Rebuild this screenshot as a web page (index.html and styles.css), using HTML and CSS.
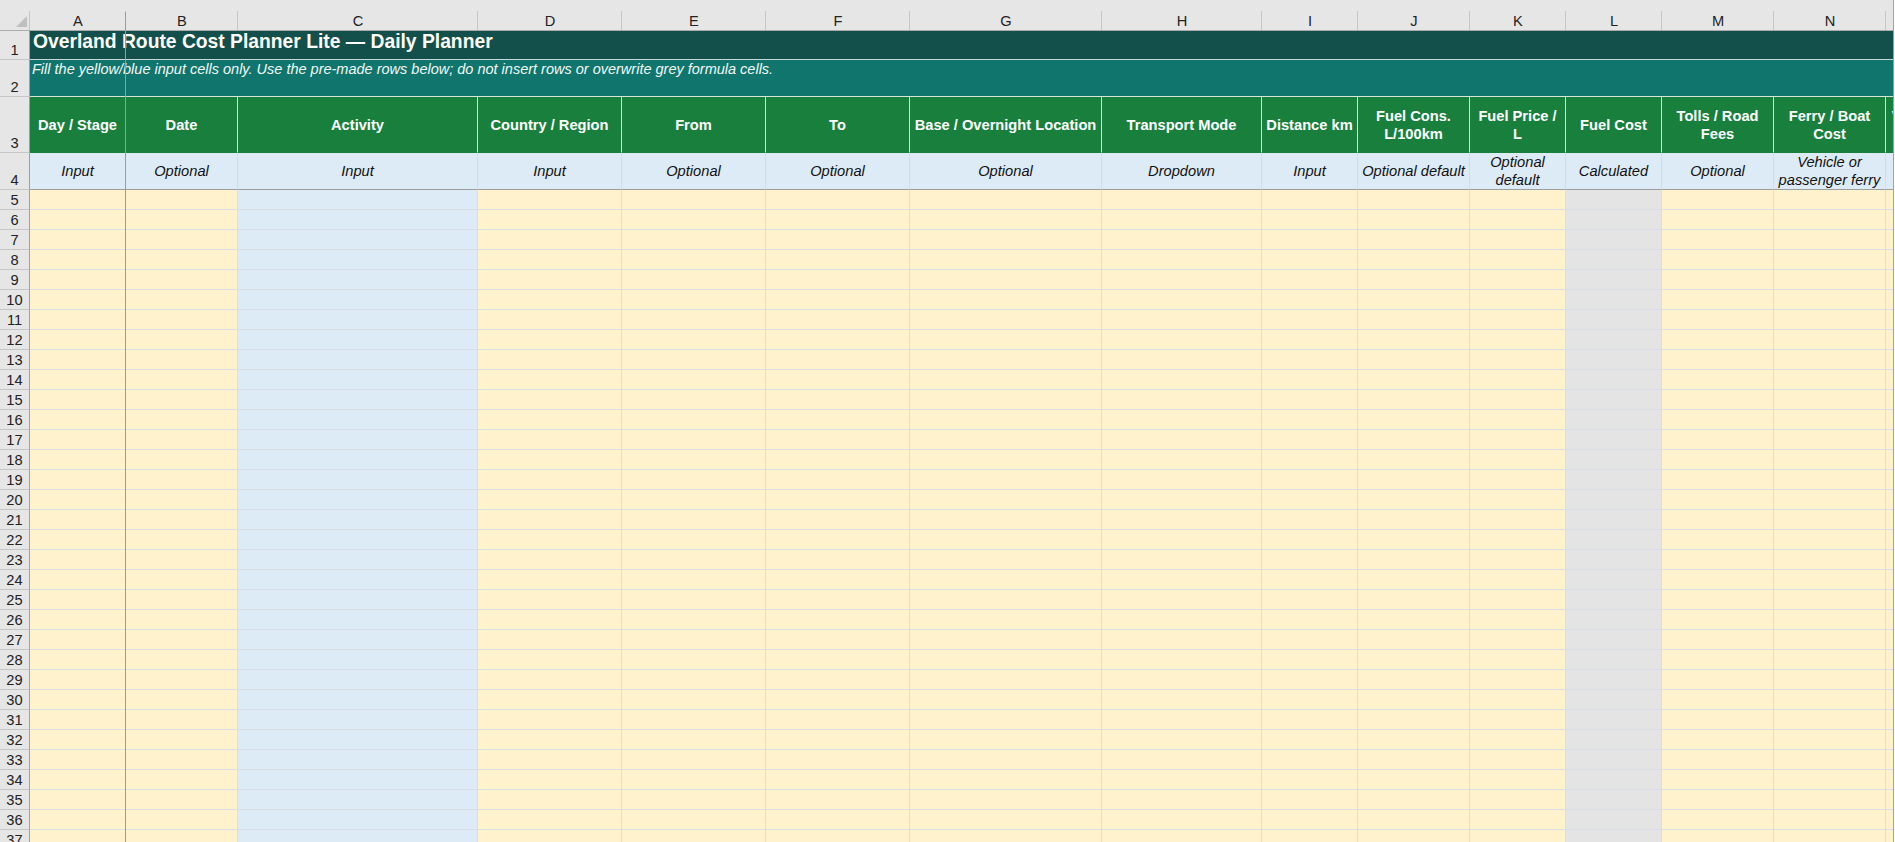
FILE: index.html
```html
<!DOCTYPE html>
<html lang="en">
<head>
<meta charset="utf-8">
<title>Overland Route Cost Planner Lite — Daily Planner</title>
<link rel="stylesheet" href="styles.css">
</head>
<body>
<div class="frame">
  <div class="sheet">
    <div class="corner"><svg width="11" height="11" viewBox="0 0 11 11"><polygon points="11,0 11,11 0,11" fill="#bfbfbf"/></svg></div>
    <div class="ch">A</div><div class="ch">B</div><div class="ch">C</div><div class="ch">D</div><div class="ch">E</div><div class="ch">F</div><div class="ch">G</div><div class="ch">H</div><div class="ch">I</div><div class="ch">J</div><div class="ch">K</div><div class="ch">L</div><div class="ch">M</div><div class="ch">N</div><div class="ch">O</div>

    <div class="rn">1</div>
    <div class="title">Overland Route Cost Planner Lite — Daily Planner</div>

    <div class="rn">2</div>
    <div class="subtitle">Fill the yellow/blue input cells only. Use the pre-made rows below; do not insert rows or overwrite grey formula cells.</div>

    <div class="rn">3</div>
    <div class="hd">Day / Stage</div>
    <div class="hd">Date</div>
    <div class="hd">Activity</div>
    <div class="hd">Country / Region</div>
    <div class="hd">From</div>
    <div class="hd">To</div>
    <div class="hd">Base / Overnight Location</div>
    <div class="hd">Transport Mode</div>
    <div class="hd">Distance km</div>
    <div class="hd">Fuel Cons. L/100km</div>
    <div class="hd">Fuel Price / L</div>
    <div class="hd">Fuel Cost</div>
    <div class="hd">Tolls / Road Fees</div>
    <div class="hd">Ferry / Boat Cost</div>
    <div class="hd">Vehicle Rental / Hire</div>

    <div class="rn">4</div>
    <div class="note">Input</div>
    <div class="note">Optional</div>
    <div class="note">Input</div>
    <div class="note">Input</div>
    <div class="note">Optional</div>
    <div class="note">Optional</div>
    <div class="note">Optional</div>
    <div class="note">Dropdown</div>
    <div class="note">Input</div>
    <div class="note">Optional default</div>
    <div class="note">Optional default</div>
    <div class="note">Calculated</div>
    <div class="note">Optional</div>
    <div class="note">Vehicle or passenger ferry</div>
    <div class="note"></div>

    <div class="rn">5</div><div class="d y"></div><div class="d y"></div><div class="d b"></div><div class="d y"></div><div class="d y"></div><div class="d y"></div><div class="d y"></div><div class="d y"></div><div class="d y"></div><div class="d y"></div><div class="d y"></div><div class="d g"></div><div class="d y"></div><div class="d y"></div><div class="d y"></div>
    <div class="rn">6</div><div class="d y"></div><div class="d y"></div><div class="d b"></div><div class="d y"></div><div class="d y"></div><div class="d y"></div><div class="d y"></div><div class="d y"></div><div class="d y"></div><div class="d y"></div><div class="d y"></div><div class="d g"></div><div class="d y"></div><div class="d y"></div><div class="d y"></div>
    <div class="rn">7</div><div class="d y"></div><div class="d y"></div><div class="d b"></div><div class="d y"></div><div class="d y"></div><div class="d y"></div><div class="d y"></div><div class="d y"></div><div class="d y"></div><div class="d y"></div><div class="d y"></div><div class="d g"></div><div class="d y"></div><div class="d y"></div><div class="d y"></div>
    <div class="rn">8</div><div class="d y"></div><div class="d y"></div><div class="d b"></div><div class="d y"></div><div class="d y"></div><div class="d y"></div><div class="d y"></div><div class="d y"></div><div class="d y"></div><div class="d y"></div><div class="d y"></div><div class="d g"></div><div class="d y"></div><div class="d y"></div><div class="d y"></div>
    <div class="rn">9</div><div class="d y"></div><div class="d y"></div><div class="d b"></div><div class="d y"></div><div class="d y"></div><div class="d y"></div><div class="d y"></div><div class="d y"></div><div class="d y"></div><div class="d y"></div><div class="d y"></div><div class="d g"></div><div class="d y"></div><div class="d y"></div><div class="d y"></div>
    <div class="rn">10</div><div class="d y"></div><div class="d y"></div><div class="d b"></div><div class="d y"></div><div class="d y"></div><div class="d y"></div><div class="d y"></div><div class="d y"></div><div class="d y"></div><div class="d y"></div><div class="d y"></div><div class="d g"></div><div class="d y"></div><div class="d y"></div><div class="d y"></div>
    <div class="rn">11</div><div class="d y"></div><div class="d y"></div><div class="d b"></div><div class="d y"></div><div class="d y"></div><div class="d y"></div><div class="d y"></div><div class="d y"></div><div class="d y"></div><div class="d y"></div><div class="d y"></div><div class="d g"></div><div class="d y"></div><div class="d y"></div><div class="d y"></div>
    <div class="rn">12</div><div class="d y"></div><div class="d y"></div><div class="d b"></div><div class="d y"></div><div class="d y"></div><div class="d y"></div><div class="d y"></div><div class="d y"></div><div class="d y"></div><div class="d y"></div><div class="d y"></div><div class="d g"></div><div class="d y"></div><div class="d y"></div><div class="d y"></div>
    <div class="rn">13</div><div class="d y"></div><div class="d y"></div><div class="d b"></div><div class="d y"></div><div class="d y"></div><div class="d y"></div><div class="d y"></div><div class="d y"></div><div class="d y"></div><div class="d y"></div><div class="d y"></div><div class="d g"></div><div class="d y"></div><div class="d y"></div><div class="d y"></div>
    <div class="rn">14</div><div class="d y"></div><div class="d y"></div><div class="d b"></div><div class="d y"></div><div class="d y"></div><div class="d y"></div><div class="d y"></div><div class="d y"></div><div class="d y"></div><div class="d y"></div><div class="d y"></div><div class="d g"></div><div class="d y"></div><div class="d y"></div><div class="d y"></div>
    <div class="rn">15</div><div class="d y"></div><div class="d y"></div><div class="d b"></div><div class="d y"></div><div class="d y"></div><div class="d y"></div><div class="d y"></div><div class="d y"></div><div class="d y"></div><div class="d y"></div><div class="d y"></div><div class="d g"></div><div class="d y"></div><div class="d y"></div><div class="d y"></div>
    <div class="rn">16</div><div class="d y"></div><div class="d y"></div><div class="d b"></div><div class="d y"></div><div class="d y"></div><div class="d y"></div><div class="d y"></div><div class="d y"></div><div class="d y"></div><div class="d y"></div><div class="d y"></div><div class="d g"></div><div class="d y"></div><div class="d y"></div><div class="d y"></div>
    <div class="rn">17</div><div class="d y"></div><div class="d y"></div><div class="d b"></div><div class="d y"></div><div class="d y"></div><div class="d y"></div><div class="d y"></div><div class="d y"></div><div class="d y"></div><div class="d y"></div><div class="d y"></div><div class="d g"></div><div class="d y"></div><div class="d y"></div><div class="d y"></div>
    <div class="rn">18</div><div class="d y"></div><div class="d y"></div><div class="d b"></div><div class="d y"></div><div class="d y"></div><div class="d y"></div><div class="d y"></div><div class="d y"></div><div class="d y"></div><div class="d y"></div><div class="d y"></div><div class="d g"></div><div class="d y"></div><div class="d y"></div><div class="d y"></div>
    <div class="rn">19</div><div class="d y"></div><div class="d y"></div><div class="d b"></div><div class="d y"></div><div class="d y"></div><div class="d y"></div><div class="d y"></div><div class="d y"></div><div class="d y"></div><div class="d y"></div><div class="d y"></div><div class="d g"></div><div class="d y"></div><div class="d y"></div><div class="d y"></div>
    <div class="rn">20</div><div class="d y"></div><div class="d y"></div><div class="d b"></div><div class="d y"></div><div class="d y"></div><div class="d y"></div><div class="d y"></div><div class="d y"></div><div class="d y"></div><div class="d y"></div><div class="d y"></div><div class="d g"></div><div class="d y"></div><div class="d y"></div><div class="d y"></div>
    <div class="rn">21</div><div class="d y"></div><div class="d y"></div><div class="d b"></div><div class="d y"></div><div class="d y"></div><div class="d y"></div><div class="d y"></div><div class="d y"></div><div class="d y"></div><div class="d y"></div><div class="d y"></div><div class="d g"></div><div class="d y"></div><div class="d y"></div><div class="d y"></div>
    <div class="rn">22</div><div class="d y"></div><div class="d y"></div><div class="d b"></div><div class="d y"></div><div class="d y"></div><div class="d y"></div><div class="d y"></div><div class="d y"></div><div class="d y"></div><div class="d y"></div><div class="d y"></div><div class="d g"></div><div class="d y"></div><div class="d y"></div><div class="d y"></div>
    <div class="rn">23</div><div class="d y"></div><div class="d y"></div><div class="d b"></div><div class="d y"></div><div class="d y"></div><div class="d y"></div><div class="d y"></div><div class="d y"></div><div class="d y"></div><div class="d y"></div><div class="d y"></div><div class="d g"></div><div class="d y"></div><div class="d y"></div><div class="d y"></div>
    <div class="rn">24</div><div class="d y"></div><div class="d y"></div><div class="d b"></div><div class="d y"></div><div class="d y"></div><div class="d y"></div><div class="d y"></div><div class="d y"></div><div class="d y"></div><div class="d y"></div><div class="d y"></div><div class="d g"></div><div class="d y"></div><div class="d y"></div><div class="d y"></div>
    <div class="rn">25</div><div class="d y"></div><div class="d y"></div><div class="d b"></div><div class="d y"></div><div class="d y"></div><div class="d y"></div><div class="d y"></div><div class="d y"></div><div class="d y"></div><div class="d y"></div><div class="d y"></div><div class="d g"></div><div class="d y"></div><div class="d y"></div><div class="d y"></div>
    <div class="rn">26</div><div class="d y"></div><div class="d y"></div><div class="d b"></div><div class="d y"></div><div class="d y"></div><div class="d y"></div><div class="d y"></div><div class="d y"></div><div class="d y"></div><div class="d y"></div><div class="d y"></div><div class="d g"></div><div class="d y"></div><div class="d y"></div><div class="d y"></div>
    <div class="rn">27</div><div class="d y"></div><div class="d y"></div><div class="d b"></div><div class="d y"></div><div class="d y"></div><div class="d y"></div><div class="d y"></div><div class="d y"></div><div class="d y"></div><div class="d y"></div><div class="d y"></div><div class="d g"></div><div class="d y"></div><div class="d y"></div><div class="d y"></div>
    <div class="rn">28</div><div class="d y"></div><div class="d y"></div><div class="d b"></div><div class="d y"></div><div class="d y"></div><div class="d y"></div><div class="d y"></div><div class="d y"></div><div class="d y"></div><div class="d y"></div><div class="d y"></div><div class="d g"></div><div class="d y"></div><div class="d y"></div><div class="d y"></div>
    <div class="rn">29</div><div class="d y"></div><div class="d y"></div><div class="d b"></div><div class="d y"></div><div class="d y"></div><div class="d y"></div><div class="d y"></div><div class="d y"></div><div class="d y"></div><div class="d y"></div><div class="d y"></div><div class="d g"></div><div class="d y"></div><div class="d y"></div><div class="d y"></div>
    <div class="rn">30</div><div class="d y"></div><div class="d y"></div><div class="d b"></div><div class="d y"></div><div class="d y"></div><div class="d y"></div><div class="d y"></div><div class="d y"></div><div class="d y"></div><div class="d y"></div><div class="d y"></div><div class="d g"></div><div class="d y"></div><div class="d y"></div><div class="d y"></div>
    <div class="rn">31</div><div class="d y"></div><div class="d y"></div><div class="d b"></div><div class="d y"></div><div class="d y"></div><div class="d y"></div><div class="d y"></div><div class="d y"></div><div class="d y"></div><div class="d y"></div><div class="d y"></div><div class="d g"></div><div class="d y"></div><div class="d y"></div><div class="d y"></div>
    <div class="rn">32</div><div class="d y"></div><div class="d y"></div><div class="d b"></div><div class="d y"></div><div class="d y"></div><div class="d y"></div><div class="d y"></div><div class="d y"></div><div class="d y"></div><div class="d y"></div><div class="d y"></div><div class="d g"></div><div class="d y"></div><div class="d y"></div><div class="d y"></div>
    <div class="rn">33</div><div class="d y"></div><div class="d y"></div><div class="d b"></div><div class="d y"></div><div class="d y"></div><div class="d y"></div><div class="d y"></div><div class="d y"></div><div class="d y"></div><div class="d y"></div><div class="d y"></div><div class="d g"></div><div class="d y"></div><div class="d y"></div><div class="d y"></div>
    <div class="rn">34</div><div class="d y"></div><div class="d y"></div><div class="d b"></div><div class="d y"></div><div class="d y"></div><div class="d y"></div><div class="d y"></div><div class="d y"></div><div class="d y"></div><div class="d y"></div><div class="d y"></div><div class="d g"></div><div class="d y"></div><div class="d y"></div><div class="d y"></div>
    <div class="rn">35</div><div class="d y"></div><div class="d y"></div><div class="d b"></div><div class="d y"></div><div class="d y"></div><div class="d y"></div><div class="d y"></div><div class="d y"></div><div class="d y"></div><div class="d y"></div><div class="d y"></div><div class="d g"></div><div class="d y"></div><div class="d y"></div><div class="d y"></div>
    <div class="rn">36</div><div class="d y"></div><div class="d y"></div><div class="d b"></div><div class="d y"></div><div class="d y"></div><div class="d y"></div><div class="d y"></div><div class="d y"></div><div class="d y"></div><div class="d y"></div><div class="d y"></div><div class="d g"></div><div class="d y"></div><div class="d y"></div><div class="d y"></div>
    <div class="rn">37</div><div class="d y"></div><div class="d y"></div><div class="d b"></div><div class="d y"></div><div class="d y"></div><div class="d y"></div><div class="d y"></div><div class="d y"></div><div class="d y"></div><div class="d y"></div><div class="d y"></div><div class="d g"></div><div class="d y"></div><div class="d y"></div><div class="d y"></div>
  </div>
  <div class="freeze-v"></div>
</div>
</body>
</html>
```

FILE: styles.css
```css
* {
  box-sizing: border-box;
  margin: 0;
  padding: 0;
}

html,
body {
  width: 1895px;
  height: 842px;
  overflow: hidden;
  background: #ffffff;
}

body {
  font-family: "Liberation Sans", Arial, sans-serif;
  font-size: 14.67px;
  color: #1a1a1a;
}

.frame {
  position: relative;
  width: 1894px;
  height: 842px;
  overflow: hidden;
  border-right: 1px solid #a3a3a3;
  background: #e6e6e6;
}

.sheet {
  display: grid;
  grid-template-columns: 30px 96px 112px 240px 144px 144px 144px 192px 160px 96px 112px 96px 96px 112px 112px 112px;
  grid-template-rows: 31px 29px 37px 56px 37px repeat(33, 20px);
  width: max-content;
}

/* top-left corner */
.corner {
  display: flex;
  align-items: flex-end;
  justify-content: flex-end;
  padding: 0 3px 3px 0;
  background: linear-gradient(#c6c6c6, #c6c6c6) right bottom / 1px 19px no-repeat, #e6e6e6;
  border-bottom: 1px solid #ababab;
}

.corner svg {
  display: block;
}

/* column letters */
.ch {
  padding-top: 12px;
  line-height: 18px;
  text-align: center;
  font-size: 14.67px;
  color: #222222;
  background: linear-gradient(#c6c6c6, #c6c6c6) right bottom / 1px 19px no-repeat, #e6e6e6;
  border-bottom: 1px solid #ababab;
}

/* row numbers */
.rn {
  display: flex;
  align-items: flex-end;
  justify-content: center;
  line-height: 17px;
  font-size: 14.67px;
  color: #222222;
  background: #e6e6e6;
  border-right: 1px solid #9e9e9e;
  border-bottom: 1px solid #c6c6c6;
}

.title {
  grid-column: 2 / -1;
  background: #134f4b;
  color: #ffffff;
  font-weight: bold;
  font-size: 19.3px;
  line-height: 22px;
  padding: 0 0 0 3px;
  white-space: nowrap;
  border-bottom: 1px solid #c9d8d6;
}

.subtitle {
  grid-column: 2 / -1;
  background: #0f756d;
  color: #f4f7f6;
  font-style: italic;
  font-size: 14.5px;
  line-height: 17px;
  padding: 1px 0 0 2px;
  white-space: nowrap;
  border-bottom: 1px solid #d3e1df;
}

.hd {
  display: flex;
  align-items: center;
  justify-content: center;
  text-align: center;
  padding: 0 3px;
  background: #187f3d;
  color: #ffffff;
  font-weight: bold;
  font-size: 14.67px;
  line-height: 18px;
  border-right: 1px solid #e2ebe5;
  border-bottom: 1px solid #187f3d;
  overflow: hidden;
}

.note {
  display: flex;
  align-items: center;
  justify-content: center;
  text-align: center;
  padding: 0 3px;
  background: #ddebf7;
  color: #111111;
  font-style: italic;
  font-size: 14.67px;
  line-height: 18.5px;
  border-right: 1px solid #d0dcea;
  border-bottom: 1px solid #9e9e9e;
  overflow: hidden;
}

.d {
  border-right: 1px solid #d9dde6;
  border-bottom: 1px solid #d9dde6;
}

.y {
  background: #fff2cc;
}

.b {
  background: #ddebf7;
}

.g {
  background: #e4e4e4;
}

/* frozen-pane divider drawn over the grid */
.freeze-v {
  position: absolute;
  left: 125px;
  top: 12px;
  bottom: 0;
  width: 1px;
  background: #9b9b9b;
}
```
